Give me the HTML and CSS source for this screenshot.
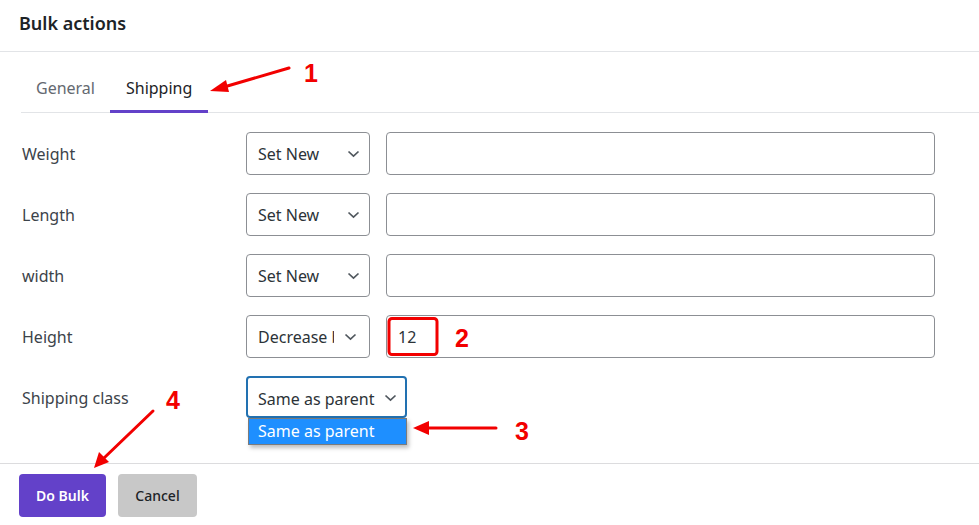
FILE: index.html
```html
<!DOCTYPE html>
<html>
<head>
<meta charset="utf-8">
<link rel="stylesheet" href="styles.css">
</head>
<body>
<div class="modal">
  <div class="header"><h1 class="title">Bulk actions</h1></div>
  <div class="tabs">
    <div class="tab">General</div>
    <div class="tab active">Shipping</div>
  </div>
  <div class="form">
    <div class="row">
      <div class="label">Weight</div>
      <div class="select"><span class="sel-text">Set New</span><svg class="chev" viewBox="0 0 13 8"><path d="M1.5 1.5 L6.5 6.2 L11.5 1.5" fill="none" stroke="#50575e" stroke-width="1.7"/></svg></div>
      <div class="input"></div>
    </div>
    <div class="row">
      <div class="label">Length</div>
      <div class="select"><span class="sel-text">Set New</span><svg class="chev" viewBox="0 0 13 8"><path d="M1.5 1.5 L6.5 6.2 L11.5 1.5" fill="none" stroke="#50575e" stroke-width="1.7"/></svg></div>
      <div class="input"></div>
    </div>
    <div class="row">
      <div class="label">width</div>
      <div class="select"><span class="sel-text">Set New</span><svg class="chev" viewBox="0 0 13 8"><path d="M1.5 1.5 L6.5 6.2 L11.5 1.5" fill="none" stroke="#50575e" stroke-width="1.7"/></svg></div>
      <div class="input"></div>
    </div>
    <div class="row">
      <div class="label">Height</div>
      <div class="select"><span class="sel-text clip">Decrease by</span><svg class="chev" viewBox="0 0 13 8"><path d="M1.5 1.5 L6.5 6.2 L11.5 1.5" fill="none" stroke="#50575e" stroke-width="1.7"/></svg></div>
      <div class="input"><span class="val">12</span></div>
    </div>
    <div class="row">
      <div class="label">Shipping class</div>
      <div class="select focus"><span class="sel-text">Same as parent</span><svg class="chev" viewBox="0 0 13 8"><path d="M1.5 1.5 L6.5 6.2 L11.5 1.5" fill="none" stroke="#50575e" stroke-width="1.7"/></svg>
        <div class="dropdown">Same as parent</div>
      </div>
    </div>
  </div>
  <div class="footer">
    <button class="btn primary">Do Bulk</button>
    <button class="btn secondary">Cancel</button>
  </div>

  <svg class="annot" width="979" height="525" viewBox="0 0 979 525">
    <g stroke="#f20000" stroke-width="3" stroke-linecap="round" fill="none">
      <path d="M289 68 L224 87"/>
      <path d="M496 428 L428 428"/>
      <path d="M153 411 L104 458"/>
    </g>
    <g fill="#f20000">
      <path d="M210 91 L226 80 L229 92 Z"/>
      <path d="M413 428 L429 421 L429 435 Z"/>
      <path d="M94 468 L99 452 L109 462 Z"/>
    </g>
    <rect x="389" y="318.5" width="48" height="36" rx="3" fill="none" stroke="#f20000" stroke-width="3"/>
    <g class="num" fill="#f20000">
      <text x="304" y="82">1</text>
      <text x="455" y="347">2</text>
      <text x="515" y="440">3</text>
      <text x="166" y="409">4</text>
    </g>
  </svg>
</div>
</body>
</html>
```
FILE: styles.css
```css
* { box-sizing: border-box; }
html, body { margin: 0; padding: 0; background: #fff; }
body {
  font-family: "Noto Sans", "Open Sans", "Liberation Sans", sans-serif;
  color: #3c434a;
  width: 979px;
  height: 525px;
  overflow: hidden;
}
.modal { position: relative; width: 979px; height: 525px; display: flex; flex-direction: column; }
.modal > div { flex: none; }
.header {
  height: 52px;
  border-bottom: 1px solid #e2e4e7;
  padding: 0 19px;
  display: flex;
  align-items: center;
}
.title { margin: 0; margin-top: -5px; font-size: 18px; font-weight: 600; color: #1d2327; }
.tabs {
  margin-left: 21px;
  height: 61px;
  display: flex;
  align-items: stretch;
  border-bottom: 1px solid #e2e4e7;
}
.tab {
  padding: 14px 15px 0;
  font-size: 16px;
  color: #646970;
  display: flex;
  align-items: center;
  border-bottom: 3px solid transparent;
  margin-bottom: -1px;
}
.tab.active { color: #1d2327; border-bottom-color: #6341c9; padding: 14px 16px 0; }
.form {
  padding: 19px 44px 0 22px;
  display: flex;
  flex-direction: column;
  gap: 18px;
  height: 350px;
}
.row { display: flex; align-items: center; height: 43px; flex: none; }
.label { width: 224px; font-size: 16px; color: #3c434a; flex: none; }
.select {
  position: relative;
  flex: none;
  width: 124px;
  height: 43px;
  border: 1px solid #8c8f94;
  border-radius: 4px;
  display: flex;
  align-items: center;
  padding: 0 9px 0 11px;
  font-size: 16px;
  color: #2c3338;
}
.sel-text { flex: 1; white-space: nowrap; overflow: hidden; }
.sel-text.clip { width: 76px; flex: none; margin-right: 6px; }
.chev { width: 13px; height: 8px; flex: none; margin-left: 4px; }
.select.focus {
  width: 161px;
  height: 42px;
  border: 2px solid #2271b1;
  padding: 0 8px 0 10px;
  margin-top: -1px;
}
.select.focus .sel-text { padding-top: 4px; }
.select.focus .chev { margin-top: 2px; }
.dropdown {
  position: absolute;
  left: 0;
  top: 40px;
  width: 159px;
  height: 27px;
  background: #1e8fff;
  color: #fff;
  border: 1px solid #7b7b7b;
  font-size: 16px;
  line-height: 25px;
  padding-left: 9px;
  white-space: nowrap;
  box-shadow: 2px 3px 4px rgba(0,0,0,0.25);
}
.input {
  flex: 1;
  margin-left: 16px;
  height: 43px;
  border: 1px solid #8c8f94;
  border-radius: 4px;
  display: flex;
  align-items: center;
  padding-left: 11px;
  font-size: 16px;
  color: #2c3338;
}
.val { font-size: 16px; }
.footer {
  border-top: 1px solid #dcdcde;
  padding: 10px 19px;
  display: flex;
  gap: 12px;
}
.btn {
  height: 43px;
  border: none;
  border-radius: 4px;
  font-family: "Noto Sans", "Open Sans", "Liberation Sans", sans-serif;
  font-size: 14px;
  font-weight: 600;
  cursor: pointer;
}
.btn.primary { width: 87px; background: #6341c9; color: #fff; }
.btn.secondary { width: 79px; background: #c8c8c8; color: #1d2327; font-weight: 500; }
.annot { position: absolute; left: 0; top: 0; pointer-events: none; }
.num text { font-family: "Liberation Sans", Arial, sans-serif; font-weight: 700; font-size: 25px; }
```
